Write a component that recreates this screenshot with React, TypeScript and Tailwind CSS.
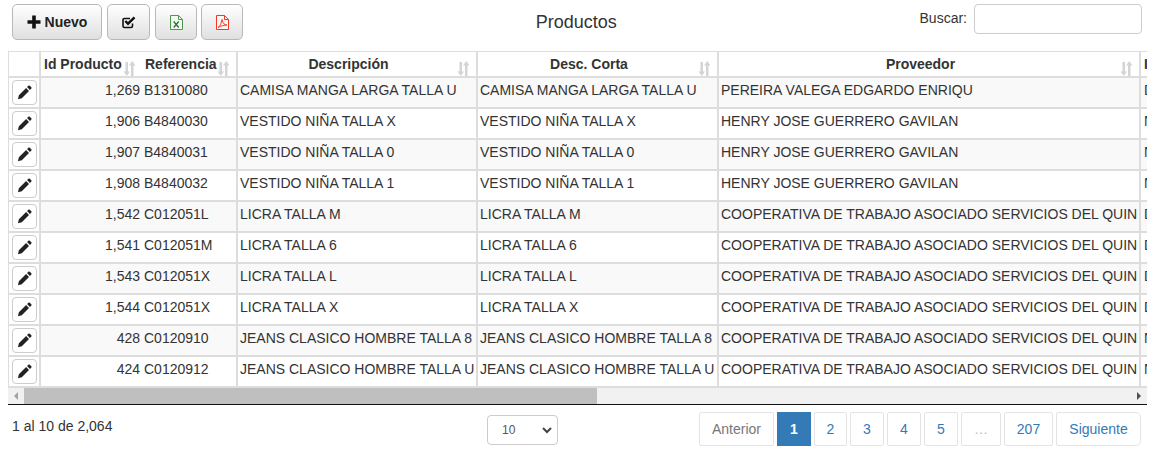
const rows = [
  ['1,269', 'B1310080', 'CAMISA MANGA LARGA TALLA U', 'PEREIRA VALEGA EDGARDO ENRIQU', 'D'],
  ['1,906', 'B4840030', 'VESTIDO NIÑA TALLA X', 'HENRY JOSE GUERRERO GAVILAN', 'N'],
  ['1,907', 'B4840031', 'VESTIDO NIÑA TALLA 0', 'HENRY JOSE GUERRERO GAVILAN', 'N'],
  ['1,908', 'B4840032', 'VESTIDO NIÑA TALLA 1', 'HENRY JOSE GUERRERO GAVILAN', 'N'],
  ['1,542', 'C012051L', 'LICRA TALLA M', 'COOPERATIVA DE TRABAJO ASOCIADO SERVICIOS DEL QUIN', 'D'],
  ['1,541', 'C012051M', 'LICRA TALLA 6', 'COOPERATIVA DE TRABAJO ASOCIADO SERVICIOS DEL QUIN', 'D'],
  ['1,543', 'C012051X', 'LICRA TALLA L', 'COOPERATIVA DE TRABAJO ASOCIADO SERVICIOS DEL QUIN', 'D'],
  ['1,544', 'C012051X', 'LICRA TALLA X', 'COOPERATIVA DE TRABAJO ASOCIADO SERVICIOS DEL QUIN', 'D'],
  ['428', 'C0120910', 'JEANS CLASICO HOMBRE TALLA 8', 'COOPERATIVA DE TRABAJO ASOCIADO SERVICIOS DEL QUIN', 'N'],
  ['424', 'C0120912', 'JEANS CLASICO HOMBRE TALLA U', 'COOPERATIVA DE TRABAJO ASOCIADO SERVICIOS DEL QUIN', 'N'],
];

function SortIcon() {
  return (
    <svg width="13" height="15" viewBox="0 0 13 15" fill="#d4d4d4" className="absolute right-[6px] bottom-0">
      <path d="M2.500 1H5v9.500h2L3.750 15 .5 10.500h2zM8 15V4.500H6L9.250 0l3.250 4.500h-2V15z" />
    </svg>
  );
}

function Pencil() {
  return (
    <svg width="15" height="15" viewBox="0 0 16 16" fill="#222">
      <path d="M12.200.7c.4-.4 1-.4 1.400 0l1.700 1.700c.4.4.4 1 0 1.400l-1.500 1.500-3.100-3.100zM9.700 3.200l3.100 3.100-7.700 7.700L1 15.200l1-4.300z" />
    </svg>
  );
}

function Check() {
  return (
    <svg width="14" height="13" viewBox="0 0 14 13" fill="none">
      <path d="M10.500 7.500V10a1.500 1.500 0 0 1-1.500 1.500H2.500A1.500 1.500 0 0 1 1 10V4a1.500 1.500 0 0 1 1.500-1.500H8" stroke="#111" strokeWidth="1.600" />
      <path d="M3.300 5l2.700 2.700L12.500 1.300" stroke="#111" strokeWidth="2.400" />
    </svg>
  );
}

function ExcelIcon() {
  return (
    <svg width="13" height="15" viewBox="0 0 13 15" fill="none">
      <path d="M.5.500h8l4 4v10H.5z" fill="#f2f8ee" stroke="#4b9a4b" />
      <path d="M8.500.500v4h4" stroke="#4b9a4b" />
      <path d="M3.700 6.500l5 6M8.700 6.500l-5 6" stroke="#2f6f3a" strokeWidth="1.300" />
    </svg>
  );
}

function PdfIcon() {
  return (
    <svg width="13" height="15" viewBox="0 0 13 15" fill="none">
      <path d="M.5.500h8l4 4v10H.5z" fill="#fff6f4" stroke="#ee3a2c" />
      <path d="M8.500.500v4h4" stroke="#ee3a2c" />
      <path d="M2 12.500c2-1 3.500-4 3.500-7 0-1.500 1-1.500 1 0 0 2.500 2 4.500 4.500 4.500-2.500 0-6 1-9 2.500z" stroke="#ee3a2c" />
    </svg>
  );
}

function ToolButton({ className, children }: { className: string; children: React.ReactNode }) {
  return (
    <button className={`flex h-[36px] items-center justify-center rounded-[5px] border border-[#b8b8b8] bg-linear-to-b from-white to-[#e0e0e0] ${className}`}>
      {children}
    </button>
  );
}

function HeadCell({ label }: { label: string }) {
  return (
    <th className="relative h-[27px] border-t border-r-2 border-b-2 border-[#ddd] p-0 pr-[17px] text-center text-sm font-bold">
      {label}
      <SortIcon />
    </th>
  );
}

function PageLink({ children, className }: { children: React.ReactNode; className: string }) {
  return (
    <a className={`flex h-[34px] items-center justify-center rounded-[2px] border border-[#e4e4e4] bg-white text-sm ${className}`}>
      {children}
    </a>
  );
}

export default function App() {
  return (
    <div className="h-[450px] w-[1157px] overflow-hidden bg-white font-['Liberation_Sans',Arial,sans-serif] text-sm text-[#333]">
      <div className="flex h-[51px] pl-3 pr-[15px] pt-1">
        <div className="flex w-[231px] gap-[5px]">
          <ToolButton className="w-[90px] gap-[4px] font-bold text-[#222]">
            <svg width="14" height="14" viewBox="0 0 14 14" fill="#111">
              <path d="M5.200.5h3.600v4.700h4.700v3.600H8.800v4.700H5.200V8.800H.5V5.200h4.700z" />
            </svg>
            Nuevo
          </ToolButton>
          <ToolButton className="w-[43px]">
            <Check />
          </ToolButton>
          <ToolButton className="w-[42px]">
            <ExcelIcon />
          </ToolButton>
          <ToolButton className="-ml-px w-[42px]">
            <PdfIcon />
          </ToolButton>
        </div>
        <div className="flex h-[36px] flex-1 items-center justify-center pr-[10px] text-lg">Productos</div>
        <div className="flex h-[30px] items-start gap-[7px]">
          <span className="pt-[4px]">Buscar:</span>
          <input className="h-[30px] w-[168px] rounded-[4px] border border-[#ccc] bg-white" />
        </div>
      </div>

      <div className="ml-2 w-[1139px] overflow-hidden">
        <table className="w-[1139px] table-fixed border-separate border-spacing-0">
          <colgroup>
            <col className="w-[33px]" />
            <col className="w-[101px]" />
            <col className="w-[96px]" />
            <col className="w-[240px]" />
            <col className="w-[241px]" />
            <col className="w-[422px]" />
            <col className="w-[6px]" />
          </colgroup>
          <thead>
            <tr>
              <th className="h-[27px] border-t border-r-2 border-b-2 border-l border-[#ddd] p-0" />
              <th className="relative border-t border-b-2 border-[#ddd] p-0 pl-[3px] text-left text-sm font-bold whitespace-nowrap">
                Id Producto
                <SortIcon />
              </th>
              <th className="relative border-t border-r-2 border-b-2 border-[#ddd] p-0 pl-[3px] text-left text-sm font-bold">
                Referencia
                <SortIcon />
              </th>
              <HeadCell label="Descripción" />
              <HeadCell label="Desc. Corta" />
              <HeadCell label="Proveedor" />
              <th className="overflow-hidden border-t border-b-2 border-[#ddd] p-0 pl-[3px] text-left text-sm font-bold">I</th>
            </tr>
          </thead>
          <tbody>
            {rows.map((row, i) => (
              <tr key={i} className={i % 2 === 0 ? 'bg-[#f9f9f9]' : 'bg-white'}>
                <td className="h-[31px] border-r-2 border-b-2 border-l border-[#ddd] bg-white p-0 pl-[3px] align-top">
                  <button className="mt-[2px] flex h-[25px] w-[25px] items-center justify-center rounded-[4px] border border-[#ccc] bg-white">
                    <Pencil />
                  </button>
                </td>
                <td className="border-b-2 border-[#ddd] p-0 pt-[2px] pr-[2px] text-right align-top">{row[0]}</td>
                <td className="border-r-2 border-b-2 border-[#ddd] p-0 pt-[2px] pl-[2px] align-top whitespace-nowrap">{row[1]}</td>
                <td className="overflow-hidden border-r-2 border-b-2 border-[#ddd] p-0 pt-[2px] pl-[2px] align-top whitespace-nowrap">{row[2]}</td>
                <td className="overflow-hidden border-r-2 border-b-2 border-[#ddd] p-0 pt-[2px] pl-[2px] align-top whitespace-nowrap">{row[2]}</td>
                <td className="overflow-hidden border-r-2 border-b-2 border-[#ddd] p-0 pt-[2px] pl-[2px] align-top whitespace-nowrap">{row[3]}</td>
                <td className="overflow-hidden border-b-2 border-[#ddd] p-0 pt-[2px] pl-[3px] align-top whitespace-nowrap">{row[4]}</td>
              </tr>
            ))}
          </tbody>
        </table>

        <div className="flex h-[16px] items-center bg-[#f1f1f1]">
          <span className="flex w-[16px] justify-center">
            <span className="h-0 w-0 border-y-4 border-r-4 border-y-transparent border-r-[#a3a3a3]" />
          </span>
          <div className="h-full w-[573px] bg-[#bfbfbf]" />
          <span className="flex-1" />
          <span className="flex w-[16px] justify-center">
            <span className="h-0 w-0 border-y-4 border-l-4 border-y-transparent border-l-[#505050]" />
          </span>
        </div>
        <div className="h-px bg-[#111]" />
      </div>

      <div className="flex pl-3 pr-[15px] pt-[7px]">
        <div className="w-[475px] pt-[4px]">1 al 10 de 2,064</div>
        <div className="w-[212px] pt-[3px]">
          <div className="flex h-[30px] w-[71px] items-center justify-between rounded-[4px] border border-[#ccc] bg-white pl-[14px] pr-[4px] text-xs text-[#555]">
            10
            <svg width="12" height="12" viewBox="0 0 12 12" fill="none" stroke="#444" strokeWidth="2">
              <path d="M2 4l4 4 4-4" />
            </svg>
          </div>
        </div>
        <div className="flex gap-[3px]">
          <PageLink className="w-[75px] text-[#777]">Anterior</PageLink>
          <span className="flex h-[34px] w-[34px] items-center justify-center bg-[#337ab7] font-bold text-white">1</span>
          <PageLink className="w-[33px] text-[#337ab7]">2</PageLink>
          <PageLink className="w-[34px] text-[#337ab7]">3</PageLink>
          <PageLink className="w-[34px] text-[#337ab7]">4</PageLink>
          <PageLink className="w-[34px] text-[#337ab7]">5</PageLink>
          <PageLink className="w-[40px] text-[#bbb]">…</PageLink>
          <PageLink className="w-[49px] text-[#337ab7]">207</PageLink>
          <PageLink className="w-[85px] rounded-r-[5px] text-[#337ab7]">Siguiente</PageLink>
        </div>
      </div>
    </div>
  );
}
